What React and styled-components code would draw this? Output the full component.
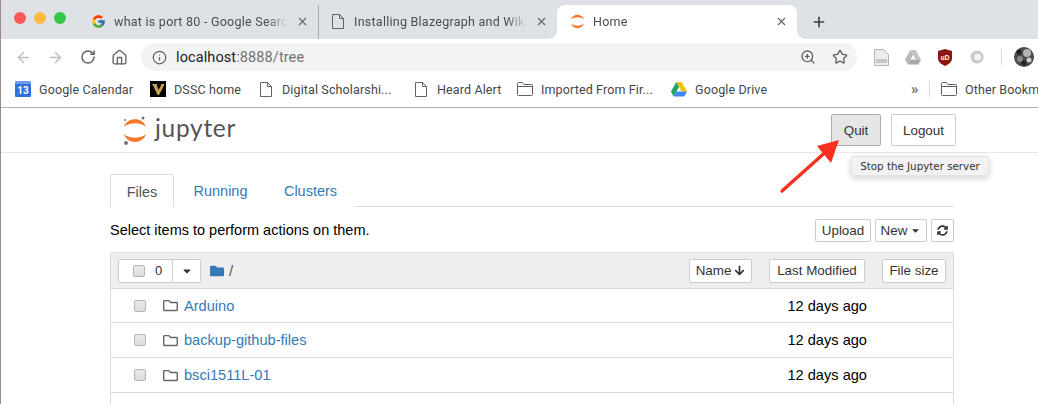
import styled, { createGlobalStyle } from "styled-components";
import { ArrowLeft, ArrowRight, RotateCw, House, Info, ZoomIn, Star, Plus, X } from "lucide-react";
import { FaFolder, FaRegFolder, FaArrowDown, FaSyncAlt, FaCaretDown } from "react-icons/fa";
import { FcGoogle } from "react-icons/fc";

const GlobalStyle = createGlobalStyle`
	html, body {
		margin: 0;
		padding: 0;
		background: #fff;
		overflow: hidden;
	}
	* {
		box-sizing: border-box;
	}
`;

const Frame = styled.div`
	position: relative;
	width: 1038px;
	height: 404px;
	overflow: hidden;
	border-left: 1px solid #9c8a86;
	font-family: "Liberation Sans", Arial, sans-serif;
	background: #fff;
`;

/* browser chrome */
const TabStrip = styled.div`
	height: 39px;
	background: #dee1e6;
	display: flex;
	align-items: flex-end;
`;

const Lights = styled.div`
	display: flex;
	gap: 8px;
	width: 77px;
	padding: 0 0 15px 13px;
	align-self: flex-end;
`;

const Light = styled.span`
	width: 12px;
	height: 12px;
	border-radius: 50%;
	background: ${({ $color }) => $color};
`;

const Tab = styled.div`
	position: relative;
	width: ${({ $width }) => $width}px;
	height: 34px;
	display: flex;
	align-items: center;
	gap: 8px;
	padding: 0 9px 2px 13px;
	font-family: Roboto, "Liberation Sans", sans-serif;
	font-size: 12.5px;
	letter-spacing: 0.25px;
	color: #4a4c50;
	background: ${({ $active }) => ($active ? "#fff" : "transparent")};
	border-radius: ${({ $active }) => ($active ? "8px 8px 0 0" : "0")};
	border-right: ${({ $divider }) => ($divider ? "1px solid #a9abaf" : "none")};

	${({ $active }) =>
		$active &&
		`
		&::before, &::after {
			content: "";
			position: absolute;
			bottom: 0;
			width: 8px;
			height: 8px;
		}
		&::before {
			left: -8px;
			background: radial-gradient(circle at 0 0, transparent 7.5px, #fff 8px);
		}
		&::after {
			right: -8px;
			background: radial-gradient(circle at 100% 0, transparent 7.5px, #fff 8px);
		}
	`}
`;

const TabTitle = styled.span`
	flex: 1;
	white-space: nowrap;
	overflow: hidden;
	-webkit-mask-image: linear-gradient(to right, #000 88%, transparent 100%);
	mask-image: linear-gradient(to right, #000 88%, transparent 100%);
`;

const NewTab = styled.div`
	margin: 0 0 9px 14px;
	display: flex;
	color: #3c4043;
`;

const Toolbar = styled.div`
	height: 34px;
	display: flex;
	align-items: center;
	padding: 2px 0 0 14px;
	color: #5f6368;
`;

const NavButton = styled.span`
	display: flex;
	width: ${({ $width }) => $width}px;
	color: ${({ $dim }) => ($dim ? "#bcc0c4" : "#5f6368")};
`;

const Omnibox = styled.div`
	width: 716px;
	height: 28px;
	border-radius: 14px;
	background: #f1f3f4;
	display: flex;
	align-items: center;
	padding: 0 9px 0 11px;
	gap: 9px;
	font-family: Roboto, "Liberation Sans", sans-serif;
	font-size: 14.5px;
	letter-spacing: 0.1px;
	color: #202124;
`;

const UrlText = styled.span`
	flex: 1;
`;

const UrlMuted = styled.span`
	color: #6f7377;
`;

const OmniboxActions = styled.div`
	display: flex;
	align-items: center;
	gap: 16px;
	color: #5f6368;
`;

const Extensions = styled.div`
	display: flex;
	align-items: center;
	margin-left: 8px;
`;

const ExtensionSlot = styled.span`
	width: 32px;
	display: flex;
	justify-content: center;
`;

const ToolbarDivider = styled.span`
	width: 1px;
	height: 16px;
	margin: 0 12px 0 8px;
	background: #d5d7da;
`;

const Bookmarks = styled.div`
	height: 35px;
	display: flex;
	align-items: center;
	padding: 0 0 2px 14px;
	border-bottom: 1px solid #b0b0b0;
	font-family: Roboto, "Liberation Sans", sans-serif;
	font-size: 12.5px;
	letter-spacing: 0.13px;
	color: #44474a;
	white-space: nowrap;
`;

const Bookmark = styled.span`
	display: flex;
	align-items: center;
	gap: 8px;
	width: ${({ $width }) => $width}px;
	flex-shrink: 0;

	svg {
		flex-shrink: 0;
	}
`;

const CalendarIcon = styled.span`
	width: 16px;
	height: 16px;
	background: #2f6fde;
	border-top: 3px solid #6c9cf0;
	border-radius: 1px;
	color: #fff;
	font-size: 10px;
	font-weight: 700;
	line-height: 13px;
	text-align: center;
`;

const Chevrons = styled.span`
	width: 18px;
	flex-shrink: 0;
	font-size: 15px;
	font-weight: 700;
	color: #6a6e72;
`;

const BookmarkDivider = styled.span`
	width: 1px;
	height: 16px;
	flex-shrink: 0;
	margin-right: 11px;
	background: #d5d7da;
`;

/* jupyter page */
const PageHeader = styled.div`
	height: 45px;
	display: flex;
	align-items: center;
	border-bottom: 1px solid #e7e7e7;
	padding-left: 122px;
`;

const Logo = styled.div`
	display: flex;
	align-items: center;
	gap: 8px;
	flex: 1;
`;

const LogoText = styled.span`
	font-family: Lato, "Open Sans", sans-serif;
	font-size: 24.5px;
	font-weight: 400;
	letter-spacing: 0.7px;
	color: #555;
	margin-top: -5px;
`;

const Button = styled.div`
	height: ${({ $height }) => $height || 24}px;
	width: ${({ $width }) => $width}px;
	display: flex;
	align-items: center;
	justify-content: center;
	gap: 3px;
	flex-shrink: 0;
	font-size: 13.4px;
	color: #333;
	background: ${({ $active }) => ($active ? "#e6e6e6" : "#fff")};
	border: 1px solid ${({ $active }) => ($active ? "#adadad" : "#ccc")};
	border-radius: 2px;
`;

const HeaderButtons = styled.div`
	display: flex;
	gap: 10px;
	margin-right: 82px;
`;

const Tooltip = styled.div`
	position: absolute;
	left: 850px;
	top: 156px;
	width: 138px;
	height: 20px;
	display: flex;
	align-items: center;
	justify-content: center;
	font-family: "DejaVu Sans", sans-serif;
	font-size: 10.3px;
	color: #333;
	background: #f2f2f2;
	border: 1px solid #e4e4e4;
	border-radius: 2px;
	box-shadow: 0 2px 6px rgba(0, 0, 0, 0.18);
`;

const ArrowOverlay = styled.svg`
	position: absolute;
	left: 770px;
	top: 131px;
`;

const Container = styled.div`
	width: 844px;
	margin: 21px 0 0 109px;
`;

const TabBar = styled.div`
	height: 33px;
	display: flex;
	border-bottom: 1px solid #ddd;
`;

const PageTab = styled.div`
	width: ${({ $width }) => $width}px;
	height: 33px;
	font-size: 14.5px;
	line-height: 34px;
	text-align: center;
	color: ${({ $active }) => ($active ? "#555" : "#337ab7")};
	background: #fff;
	border: ${({ $active }) => ($active ? "1px solid #ddd" : "none")};
	border-bottom: none;
	border-radius: 2px 2px 0 0;
`;

const ActionRow = styled.div`
	height: 45px;
	display: flex;
	align-items: center;
	gap: 4px;
	padding-top: 1px;
`;

const ActionText = styled.span`
	flex: 1;
	font-size: 14.5px;
	color: #000;
`;

const FileList = styled.div`
	border: 1px solid #ddd;
	border-bottom: none;
	border-top-left-radius: 2px;
	border-top-right-radius: 2px;
`;

const ListHeader = styled.div`
	height: 36px;
	display: flex;
	align-items: center;
	padding: 0 7px;
	background: #eee;
	border-bottom: 1px solid #ddd;
`;

const SelectGroup = styled.div`
	display: flex;
	margin-right: 9px;
`;

const SelectBox = styled.div`
	width: 55px;
	height: 24px;
	display: flex;
	align-items: center;
	gap: 10px;
	padding-left: 14px;
	font-size: 13px;
	color: #333;
	background: #fff;
	border: 1px solid #ccc;
	border-radius: 2px 0 0 2px;
`;

const SelectCaret = styled.div`
	width: 28px;
	height: 24px;
	display: flex;
	align-items: center;
	justify-content: center;
	color: #333;
	background: #fff;
	border: 1px solid #ccc;
	border-left: none;
	border-radius: 0 2px 2px 0;
`;

const CheckBox = styled.span`
	width: 12px;
	height: 12px;
	flex-shrink: 0;
	border-radius: 2px;
	border: 1px solid #b5b5b5;
	background: linear-gradient(#e9e9e9, #dcdcdc);
`;

const Crumb = styled.div`
	flex: 1;
	display: flex;
	align-items: center;
	gap: 5px;
	font-size: 15px;
	color: #555;
`;

const SortButtons = styled.div`
	display: flex;
	gap: 17px;
`;

const Row = styled.div`
	height: 35px;
	display: flex;
	align-items: center;
	padding-left: 23px;
	border-bottom: 1px solid #ddd;
	font-size: 14.6px;

	${ListHeader} + & {
		height: 34px;
	}
`;

const RowIcon = styled.span`
	display: flex;
	margin: 0 6px 0 17px;
	color: #666;
`;

const RowName = styled.a`
	flex: 1;
	color: #337ab7;
`;

const RowDate = styled.span`
	width: 80px;
	margin-right: 86px;
	text-align: right;
	color: #000;
`;

const rows = [
	{ name: "Arduino", date: "12 days ago" },
	{ name: "backup-github-files", date: "12 days ago" },
	{ name: "bsci1511L-01", date: "12 days ago" },
	{ name: "", date: "" },
];

const JupyterMark = ({ width, height, dots }) => (
	<svg width={width} height={height} viewBox="0 0 24 29">
		<path d="M1 11 C4 0.5 20 0.5 23 11 C18 6 6 6 1 11 Z" fill="#f37726" />
		<path d="M1 18 C4 28.5 20 28.5 23 18 C18 23 6 23 1 18 Z" fill="#f37726" />
		{dots && (
			<>
				<circle cx="20" cy="2" r="1.5" fill="#767677" />
				<circle cx="2" cy="4" r="1" fill="#767677" />
				<circle cx="3" cy="27" r="2" fill="#767677" />
			</>
		)}
	</svg>
);

const FileGlyph = () => (
	<svg width="14" height="15" viewBox="0 0 14 15" fill="none" stroke="#5f6368">
		<path d="M.5.5h7l4 4v10h-11Z" />
		<path d="M7.5.5v4h4" />
	</svg>
);

const FolderGlyph = () => (
	<svg width="16" height="14" viewBox="0 0 16 14" fill="none" stroke="#5f6368">
		<path d="M.5 12.5v-11a1 1 0 0 1 1-1h4l1.5 2h7.5a1 1 0 0 1 1 1v9a1 1 0 0 1-1 1h-13a1 1 0 0 1-1-1Z" />
		<path d="M.5 4.5h15" />
	</svg>
);

const VanderbiltMark = () => (
	<svg width="16" height="16" viewBox="0 0 16 16">
		<rect width="16" height="16" fill="#000" />
		<path d="M2 3h5v1.5L8.5 9 11 4.5V3h3v1.5L9 14H7.5L3 4.5Z" fill="#c9a14a" />
	</svg>
);

const DriveMark = ({ gray }) => (
	<svg width="16" height="15" viewBox="0 0 16 15">
		<path d="M5.3 0h5.4L16 9.5h-5.3Z" fill={gray ? "#c4c4c4" : "#f4c20d"} />
		<path d="M5.3 0 0 9.5l2.7 5L8 5Z" fill={gray ? "#b8b8b8" : "#1fa463"} />
		<path d="M2.7 14.5h10.6L16 9.5H5.3Z" fill={gray ? "#aaa" : "#4285f4"} />
	</svg>
);

const ShieldMark = () => (
	<svg width="14" height="17" viewBox="0 0 14 17">
		<path d="M7 0 14 2v7c0 4-3 6-7 8-4-2-7-4-7-8V2Z" fill="#8f1414" />
		<text x="7" y="10.5" fontSize="6.5" fontWeight="700" fill="#fff" textAnchor="middle" fontFamily="Liberation Sans">
			uD
		</text>
	</svg>
);

const PageExtension = () => (
	<svg width="15" height="17" viewBox="0 0 15 17">
		<path d="M.5.5h9l5 5v11H.5Z" fill="#ececec" stroke="#b5b5b5" />
		<rect x="2" y="10" width="11" height="4" fill="#c4c4c4" />
	</svg>
);

const RingExtension = () => (
	<svg width="14" height="14" viewBox="0 0 14 14">
		<circle cx="7" cy="7" r="6.5" fill="#c8c8c8" />
		<circle cx="7.6" cy="7" r="3.6" fill="#f4f4f4" />
	</svg>
);

const AvatarMark = () => (
	<svg width="20" height="20" viewBox="0 0 20 20">
		<circle cx="10" cy="10" r="10" fill="#4a4a4a" />
		<circle cx="13" cy="6" r="4" fill="#b5b5b5" />
		<circle cx="5" cy="5" r="2.5" fill="#222" />
		<circle cx="6" cy="12" r="3" fill="#8a8a8a" />
		<circle cx="15" cy="13" r="2.5" fill="#d0d0d0" />
		<circle cx="10" cy="16" r="2.5" fill="#222" />
	</svg>
);

const QuitArrow = () => (
	<ArrowOverlay width="80" height="70" viewBox="0 0 80 70">
		<path d="M11 60 L58 18" stroke="#fb3021" strokeWidth="3.4" strokeLinecap="round" />
		<path d="M68 9 L60 32 L46 15 Z" fill="#fb3021" />
	</ArrowOverlay>
);

const App = () => {
	return (
		<Frame>
			<GlobalStyle />
			<TabStrip>
				<Lights>
					<Light $color="#fc5b57" />
					<Light $color="#fdbc40" />
					<Light $color="#34c84a" />
				</Lights>
				<Tab $width={241} $divider>
					<FcGoogle size={15} />
					<TabTitle>what is port 80 - Google Search</TabTitle>
					<X size={13} color="#5f6368" />
				</Tab>
				<Tab $width={238}>
					<FileGlyph />
					<TabTitle>Installing Blazegraph and Wikibase</TabTitle>
					<X size={13} color="#5f6368" />
				</Tab>
				<Tab $width={240} $active>
					<JupyterMark width={15} height={17} />
					<TabTitle>Home</TabTitle>
					<X size={13} color="#5f6368" />
				</Tab>
				<NewTab>
					<Plus size={16} strokeWidth={2.4} />
				</NewTab>
			</TabStrip>
			<Toolbar>
				<NavButton $width={32} $dim><ArrowLeft size={17} /></NavButton>
				<NavButton $width={33} $dim><ArrowRight size={17} /></NavButton>
				<NavButton $width={31}><RotateCw size={16} strokeWidth={2.2} /></NavButton>
				<NavButton $width={30}><House size={17} strokeWidth={1.9} /></NavButton>
				<Omnibox>
					<Info size={15} color="#5f6368" />
					<UrlText>localhost<UrlMuted>:8888/tree</UrlMuted></UrlText>
					<OmniboxActions>
						<ZoomIn size={16} />
						<Star size={16} strokeWidth={2} />
					</OmniboxActions>
				</Omnibox>
				<Extensions>
					<ExtensionSlot><PageExtension /></ExtensionSlot>
					<ExtensionSlot><DriveMark gray /></ExtensionSlot>
					<ExtensionSlot><ShieldMark /></ExtensionSlot>
					<ExtensionSlot><RingExtension /></ExtensionSlot>
					<ToolbarDivider />
					<AvatarMark />
				</Extensions>
			</Toolbar>
			<Bookmarks>
				<Bookmark $width={135}><CalendarIcon>13</CalendarIcon>Google Calendar</Bookmark>
				<Bookmark $width={110}><VanderbiltMark />DSSC home</Bookmark>
				<Bookmark $width={155}><FileGlyph />Digital Scholarshi...</Bookmark>
				<Bookmark $width={102}><FileGlyph />Heard Alert</Bookmark>
				<Bookmark $width={154}><FolderGlyph />Imported From Fir...</Bookmark>
				<Bookmark $width={240}><DriveMark />Google Drive</Bookmark>
				<Chevrons>»</Chevrons>
				<BookmarkDivider />
				<Bookmark $width={120}><FolderGlyph />Other Bookmarks</Bookmark>
			</Bookmarks>

			<PageHeader>
				<Logo>
					<JupyterMark width={24} height={29} dots />
					<LogoText>jupyter</LogoText>
				</Logo>
				<HeaderButtons>
					<Button $active $width={50} $height={32}>Quit</Button>
					<Button $width={65} $height={32}>Logout</Button>
				</HeaderButtons>
			</PageHeader>

			<Container>
				<TabBar>
					<PageTab $active $width={64}>Files</PageTab>
					<PageTab $width={93}>Running</PageTab>
					<PageTab $width={87}>Clusters</PageTab>
				</TabBar>
				<ActionRow>
					<ActionText>Select items to perform actions on them.</ActionText>
					<Button $width={56} $height={23}>Upload</Button>
					<Button $width={52} $height={23}>New <FaCaretDown size={11} /></Button>
					<Button $width={23} $height={23}><FaSyncAlt size={11} /></Button>
				</ActionRow>
				<FileList>
					<ListHeader>
						<SelectGroup>
							<SelectBox><CheckBox />0</SelectBox>
							<SelectCaret><FaCaretDown size={12} /></SelectCaret>
						</SelectGroup>
						<Crumb><FaFolder size={14} color="#337ab7" />/</Crumb>
						<SortButtons>
							<Button $width={63}>Name <FaArrowDown size={11} /></Button>
							<Button $width={96}>Last Modified</Button>
							<Button $width={64}>File size</Button>
						</SortButtons>
					</ListHeader>
					{rows.map(({ name, date }, index) => (
						<Row key={index}>
							<CheckBox />
							<RowIcon><FaRegFolder size={15} /></RowIcon>
							<RowName>{name}</RowName>
							<RowDate>{date}</RowDate>
						</Row>
					))}
				</FileList>
			</Container>

			<Tooltip>Stop the Jupyter server</Tooltip>
			<QuitArrow />
		</Frame>
	);
};

export default App;
